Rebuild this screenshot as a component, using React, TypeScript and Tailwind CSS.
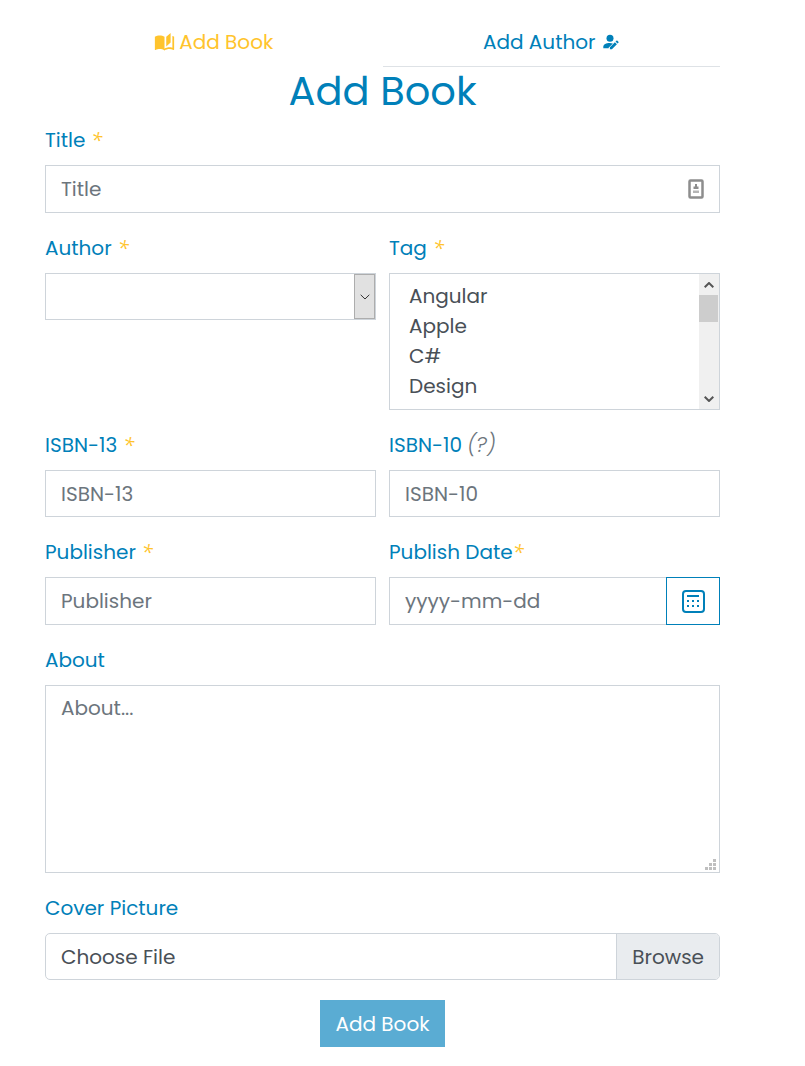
import type { ReactNode } from "react";

const fieldClass =
  "block w-full min-w-0 border border-[#ced4da] bg-white px-[15px] text-[#495057] placeholder:text-[#6c757d] placeholder:opacity-100 outline-none focus:border-[#0080b9]";

function Label({ htmlFor, children }: { htmlFor: string; children: ReactNode }) {
  return (
    <label htmlFor={htmlFor} className="mb-2.5 block h-[30px] text-[#0080b9]">
      {children}
    </label>
  );
}

function Required({ spaced = true }: { spaced?: boolean }) {
  return (
    <em
      className={
        spaced
          ? "ml-1.5 font-['Open_Sans','Inter',sans-serif] text-[#ffc42d]"
          : "font-['Open_Sans','Inter',sans-serif] text-[#ffc42d]"
      }
    >
      *
    </em>
  );
}

function BookIcon() {
  return (
    <svg viewBox="0 0 24 24" className="size-[21px]" fill="currentColor" aria-hidden="true">
      <path d="M19 1L14 5.500V16.500L19 12V1M6.500 4C4.550 4 2.450 4.400 1 5.500V20.160C1 20.410 1.250 20.660 1.500 20.660C1.600 20.660 1.650 20.590 1.750 20.590C3.100 19.940 5.050 19.500 6.500 19.500C8.450 19.500 10.550 19.900 12 21C13.350 20.150 15.800 19.500 17.500 19.500C19.150 19.500 20.850 19.810 22.250 20.560C22.350 20.610 22.400 20.590 22.500 20.590C22.750 20.590 23 20.340 23 20.090V5.500C22.400 5.050 21.750 4.750 21 4.500V18C19.900 17.650 18.700 17.500 17.500 17.500C15.800 17.500 13.350 18.150 12 19V5.500C10.550 4.400 8.450 4 6.500 4Z" />
    </svg>
  );
}

function AuthorIcon() {
  return (
    <svg viewBox="0 0 16 16" className="size-4" fill="currentColor" aria-hidden="true">
      <circle cx="7" cy="4.2" r="3.5" />
      <path d="M.3 14.200v-1.400C.3 10.400 3.200 8.900 6.700 8.900c1.200 0 2.300.2 3.200.6L5.600 13.700v.5Z" />
      <path d="M6.900 15.200v-2l5-5 2 2-5 5ZM12.500 7.600l.9-.8c.3-.3.700-.3 1 0l1 1c.3.3.3.7 0 1l-.9.8Z" />
    </svg>
  );
}

function CalendarIcon() {
  return (
    <svg viewBox="0 0 24 24" className="size-6" fill="currentColor" aria-hidden="true">
      <rect x="2" y="2" width="21" height="21" rx="3" fill="none" stroke="currentColor" strokeWidth="2" />
      <path d="M6 6h12v2H6ZM6 11h2v2H6ZM11 11h2v2h-2ZM16 11h2v2h-2ZM6 16h2v2H6ZM11 16h2v2h-2ZM16 16h2v2h-2Z" />
    </svg>
  );
}

function ContactIcon() {
  return (
    <svg viewBox="0 0 16 20" className="h-5 w-4" aria-hidden="true">
      <rect x="1.5" y="1.5" width="13" height="17" rx="1" fill="#fff" stroke="#8d8d8d" strokeWidth="2.5" />
      <path d="M7 5h2v2.500h1.500V10h-5V7.500H7Z" fill="#8d8d8d" />
      <path d="M5 11.500h6v2.500H5Z" fill="#b5b5b5" />
    </svg>
  );
}

function Chevron({ up = false, className }: { up?: boolean; className: string }) {
  return (
    <svg viewBox="0 0 10 6" className={className} fill="none" stroke="currentColor" aria-hidden="true">
      <path d={up ? "M.7 5.2 5 1l4.3 4.2" : "M.7.8 5 5 9.3.8"} />
    </svg>
  );
}

export default function App() {
  return (
    <main className="bg-white pt-[17px] pr-[85px] pb-[19px] pl-[45px] font-['Poppins','Inter',sans-serif] text-[20px] leading-[30px]">
      <nav className="grid grid-cols-2">
        <a href="#book" className="flex h-[50px] items-center justify-center gap-1 text-[#ffc42d]">
          <BookIcon />
          Add Book
        </a>
        <a
          href="#author"
          className="flex h-[50px] items-center justify-center gap-2 border-b border-[#dee2e6] text-[#0080b9]"
        >
          Add Author
          <AuthorIcon />
        </a>
      </nav>
      <h1 className="mb-2.5 text-center text-[40px] leading-[48px] text-[#0080b9]">Add Book</h1>

      <form className="flex flex-col gap-5" onSubmit={(e) => e.preventDefault()}>
        <div>
          <Label htmlFor="title">
            Title
            <Required />
          </Label>
          <div className="relative">
            <input id="title" type="text" placeholder="Title" className={`${fieldClass} h-12`} />
            <span className="pointer-events-none absolute inset-y-0 right-4 flex items-center">
              <ContactIcon />
            </span>
          </div>
        </div>

        <div className="grid grid-cols-2 gap-x-[13px]">
          <div>
            <Label htmlFor="author">
              Author
              <Required />
            </Label>
            <div className="relative">
              <select id="author" className={`${fieldClass} h-[47px] appearance-none`}>
                <option value=""></option>
              </select>
              <span className="pointer-events-none absolute inset-y-px right-px flex w-[21px] items-center justify-center border border-[#adadad] bg-[#e1e1e1] text-[#333]">
                <Chevron className="h-1.5 w-2.5" />
              </span>
            </div>
          </div>
          <div>
            <Label htmlFor="tag">
              Tag
              <Required />
            </Label>
            <div className="flex h-[137px] border border-[#ced4da]">
              <select
                id="tag"
                multiple
                size={4}
                className="h-full min-w-0 flex-1 appearance-none overflow-y-auto bg-white py-[7px] pl-[15px] text-[#495057] outline-none [scrollbar-width:none]"
              >
                <option className="min-h-[30px] px-1 py-0 leading-[30px]">Angular</option>
                <option className="min-h-[30px] px-1 py-0 leading-[30px]">Apple</option>
                <option className="min-h-[30px] px-1 py-0 leading-[30px]">C#</option>
                <option className="min-h-[30px] px-1 py-0 leading-[30px]">Design</option>
              </select>
              <div className="flex w-5 flex-col bg-[#f0f0f0] pr-px text-[#555]" aria-hidden="true">
                <span className="flex h-[21px] items-center justify-center">
                  <Chevron up className="h-1.5 w-2.5 stroke-2" />
                </span>
                <span className="h-[27px] bg-[#cdcdcd]" />
                <span className="mt-auto flex h-[21px] items-center justify-center">
                  <Chevron className="h-1.5 w-2.5 stroke-2" />
                </span>
              </div>
            </div>
          </div>
        </div>

        <div className="grid grid-cols-2 gap-x-[13px]">
          <div>
            <Label htmlFor="isbn13">
              ISBN-13
              <Required />
            </Label>
            <input id="isbn13" type="text" placeholder="ISBN-13" className={`${fieldClass} h-[47px]`} />
          </div>
          <div>
            <Label htmlFor="isbn10">
              ISBN-10 <em className="text-[21px] font-light text-[#6c757d]">(?)</em>
            </Label>
            <input id="isbn10" type="text" placeholder="ISBN-10" className={`${fieldClass} h-[47px]`} />
          </div>
        </div>

        <div className="grid grid-cols-2 gap-x-[13px]">
          <div>
            <Label htmlFor="publisher">
              Publisher
              <Required />
            </Label>
            <input id="publisher" type="text" placeholder="Publisher" className={`${fieldClass} h-12`} />
          </div>
          <div>
            <Label htmlFor="date">
              Publish Date
              <Required spaced={false} />
            </Label>
            <div className="flex">
              <input id="date" type="text" placeholder="yyyy-mm-dd" className={`${fieldClass} h-12`} />
              <button
                type="button"
                aria-label="Open calendar"
                className="-ml-px flex h-12 w-[54px] shrink-0 items-center justify-center border border-[#0080b9] bg-white text-[#0080b9]"
              >
                <CalendarIcon />
              </button>
            </div>
          </div>
        </div>

        <div>
          <Label htmlFor="about">About</Label>
          <div className="relative">
            <textarea
              id="about"
              placeholder="About..."
              className="block h-[188px] w-full resize-none border border-[#ced4da] bg-white px-[15px] py-[7px] text-[#495057] outline-none placeholder:text-[#6c757d] placeholder:opacity-100"
            />
            <svg
              viewBox="0 0 11 11"
              className="pointer-events-none absolute right-1 bottom-[3px] size-[11px]"
              fill="#bfbfbf"
              aria-hidden="true"
            >
              <path d="M8 0h3v3H8ZM4 4h3v3H4ZM8 4h3v3H8ZM0 8h3v3H0ZM4 8h3v3H4ZM8 8h3v3H8Z" />
            </svg>
          </div>
        </div>

        <div>
          <Label htmlFor="cover">Cover Picture</Label>
          <label
            htmlFor="cover"
            className="relative flex h-[47px] overflow-hidden rounded-[5px] border border-[#ced4da] bg-white text-[#495057]"
          >
            <input id="cover" type="file" className="sr-only" />
            <span className="flex flex-1 items-center px-[15px]">Choose File</span>
            <span className="flex items-center border-l border-[#ced4da] bg-[#e9ecef] px-[15px]">Browse</span>
          </label>
        </div>

        <button type="submit" className="h-[47px] self-center bg-[#5aacd3] px-[15px] text-white">
          Add Book
        </button>
      </form>
    </main>
  );
}
